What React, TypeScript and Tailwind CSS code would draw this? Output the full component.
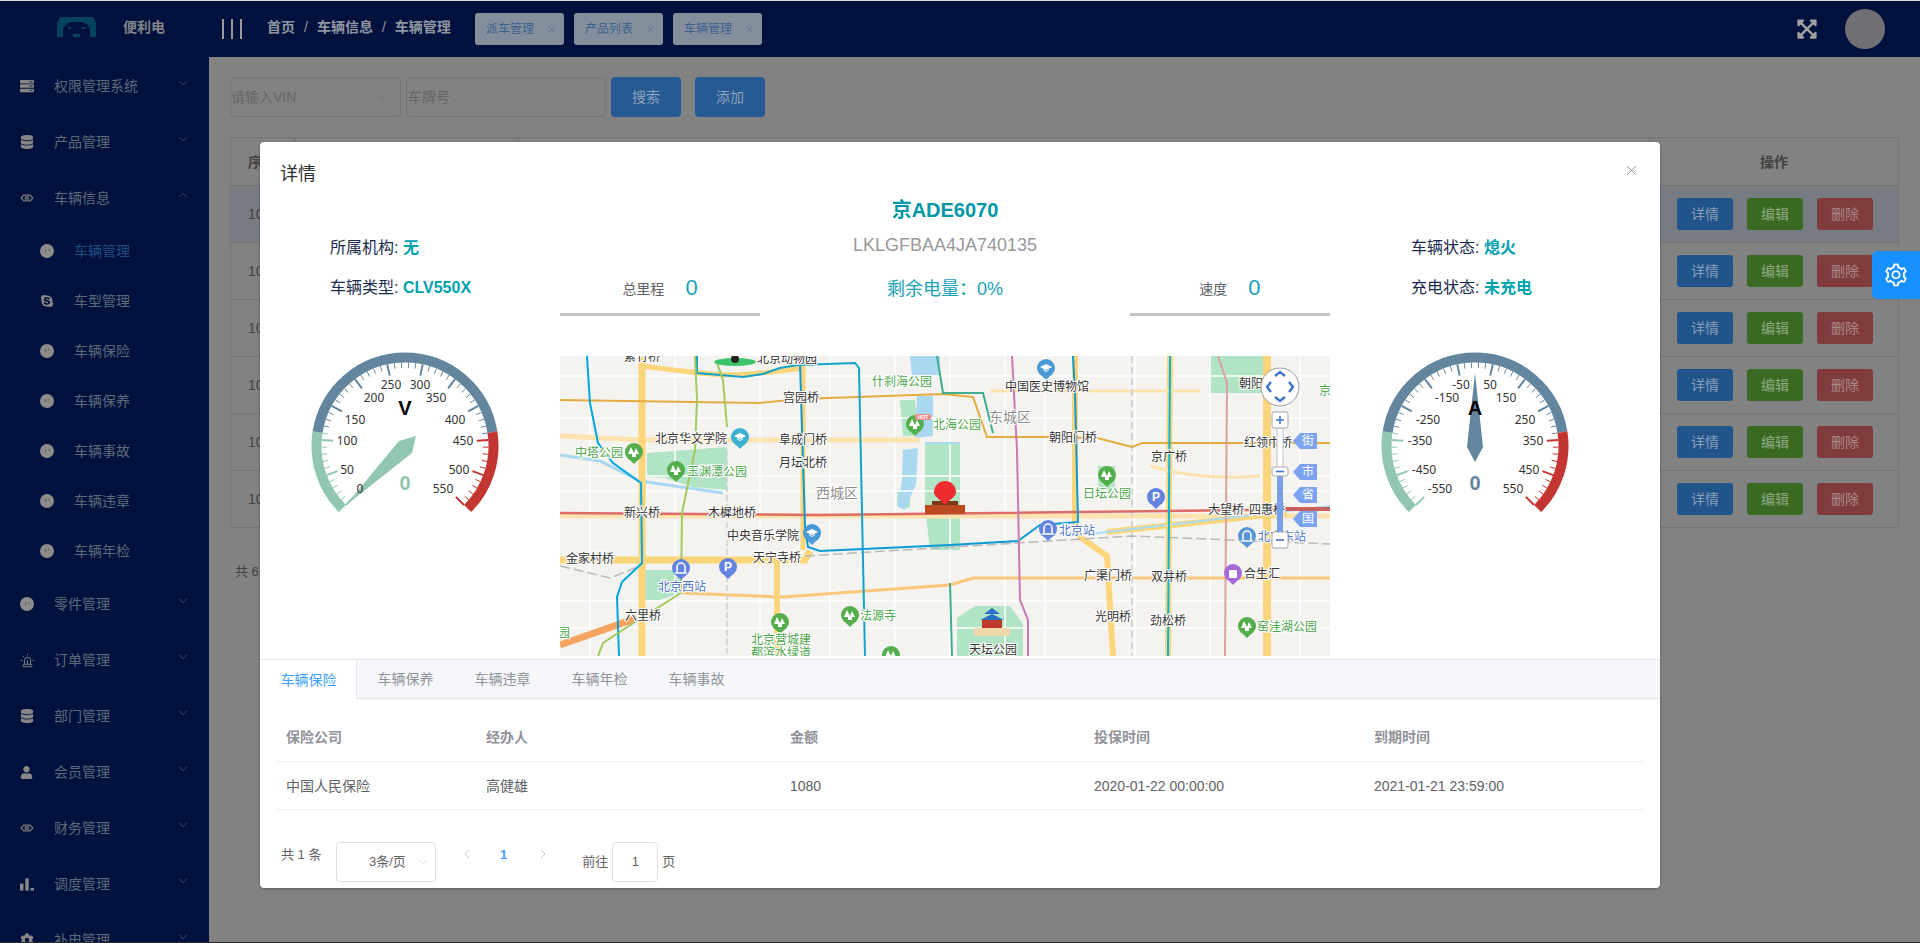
import { ChevronDown, ChevronLeft, ChevronRight, ChevronUp, Siren, X } from "lucide-react";
import { AiOutlineSetting } from "react-icons/ai";
import { FaCog, FaDatabase, FaExpandArrowsAlt, FaServer, FaSkype, FaUser } from "react-icons/fa";

const BubbleIcon = () => (
	<svg width="14" height="14" viewBox="0 0 14 14">
		<circle cx="7" cy="7" r="7" fill="#8c8c8c" />
		<path d="M5 6h1.5M8 6h1.5M5 7.5h1" stroke="#4a4a4a" strokeWidth="0.8" />
	</svg>
);

const EyeIcon = () => (
	<svg width="14" height="10" viewBox="0 0 16 12" fill="none" stroke="#7a7a7a" strokeWidth="1.4">
		<path d="M1 6 4 2.5h8L15 6l-3 3.5H4z" />
		<path d="M6 4v4M8 3.5v5M10 4v4" />
	</svg>
);

const BarsIcon = () => (
	<svg width="14" height="13" viewBox="0 0 16 14" fill="#868686">
		<rect x="0" y="6" width="4" height="8" />
		<rect x="6" y="0" width="4" height="14" />
		<rect x="12" y="11" width="4" height="3" />
	</svg>
);

const menuTop = [
	{ name: "权限管理系统", icon: <FaServer size={14} color="#868686" /> },
	{ name: "产品管理", icon: <FaDatabase size={14} color="#868686" /> },
];

const subMenu = [
	{ name: "车辆管理", active: true, icon: <BubbleIcon /> },
	{ name: "车型管理", icon: <FaSkype size={14} color="#868686" /> },
	{ name: "车辆保险", icon: <BubbleIcon /> },
	{ name: "车辆保养", icon: <BubbleIcon /> },
	{ name: "车辆事故", icon: <BubbleIcon /> },
	{ name: "车辆违章", icon: <BubbleIcon /> },
	{ name: "车辆年检", icon: <BubbleIcon /> },
];

const menuBottom = [
	{ name: "零件管理", icon: <BubbleIcon /> },
	{ name: "订单管理", icon: <Siren size={15} color="#868686" strokeWidth={1.5} /> },
	{ name: "部门管理", icon: <FaDatabase size={14} color="#868686" /> },
	{ name: "会员管理", icon: <FaUser size={13} color="#868686" /> },
	{ name: "财务管理", icon: <EyeIcon /> },
	{ name: "调度管理", icon: <BarsIcon /> },
	{ name: "补电管理", icon: <FaCog size={14} color="#868686" /> },
];

const MenuItem = ({ name, icon, open }: { name: string; icon: React.ReactNode; open?: boolean }) => (
	<div className="relative flex h-14 shrink-0 items-center pl-5 text-sm text-[#5f6a78]">
		<span className="flex w-[34px] items-center">{icon}</span>
		<span>{name}</span>
		<span className="absolute left-[176px] top-[18px]">
			{open ? (
				<ChevronUp size={14} strokeWidth={1} color="#6a7482" />
			) : (
				<ChevronDown size={14} strokeWidth={1} color="#6a7482" />
			)}
		</span>
	</div>
);

const Sidebar = () => (
	<aside className="flex w-[209px] shrink-0 flex-col overflow-hidden bg-[#00113e] pt-px">
		{menuTop.map((m) => (
			<MenuItem key={m.name} {...m} />
		))}
		<MenuItem name="车辆信息" icon={<EyeIcon />} open />
		{subMenu.map((m) => (
			<div
				key={m.name}
				className={`flex h-[50px] shrink-0 items-center pl-10 text-sm ${m.active ? "text-[#204f80]" : "text-[#5f6a78]"}`}
			>
				<span className="flex w-[34px] items-center">{m.icon}</span>
				<span>{m.name}</span>
			</div>
		))}
		{menuBottom.map((m) => (
			<MenuItem key={m.name} {...m} />
		))}
	</aside>
);

const tags = ["派车管理", "产品列表", "车辆管理"];

const Header = () => (
	<header className="flex h-14 shrink-0 items-center bg-[#00113e]">
		<div className="flex w-[222px] shrink-0 items-center pl-[57px]">
			<svg width="39" height="20" viewBox="0 0 39 20" className="-mt-1">
				<path d="M3 0H36L39 6V20H33V12Q31 7 25 5H14Q8 7 6 12V20H0V6z" fill="#05435c" />
				<rect x="11" y="10" width="3" height="2" fill="#05435c" />
				<rect x="25" y="10" width="3" height="2" fill="#05435c" />
				<rect x="16" y="17" width="7" height="3" fill="#05435c" />
			</svg>
			<span className="-mt-1 ml-[27px] text-sm font-bold text-[#808488]">便利电</span>
		</div>
		<div className="flex h-5 w-[45px] shrink-0 gap-[7px]">
			<i className="h-5 w-0.5 bg-[#9a9a9a]" />
			<i className="h-5 w-0.5 bg-[#9a9a9a]" />
			<i className="h-5 w-0.5 bg-[#9a9a9a]" />
		</div>
		<div className="-mt-1 flex w-[208px] shrink-0 items-center gap-[9px] text-sm font-bold text-[#9096a0]">
			<span>首页</span>
			<span className="font-normal">/</span>
			<span>车辆信息</span>
			<span className="font-normal">/</span>
			<span>车辆管理</span>
		</div>
		<div className="flex gap-[10px]">
			{tags.map((t) => (
				<div
					key={t}
					className="flex h-8 w-[89px] items-center rounded-[3px] bg-[#858f9c] pl-[11px] text-xs text-[#3b5f8f]"
				>
					<span>{t}</span>
					<X size={11} strokeWidth={1.2} className="ml-3" />
				</div>
			))}
		</div>
		<div className="ml-auto flex items-center gap-[27px] pr-[35px]">
			<FaExpandArrowsAlt size={22} color="#a0a0a0" />
			<div className="h-10 w-10 rounded-full bg-[#717175]" />
		</div>
	</header>
);

const rowButtons = [
	{ label: "详情", cls: "bg-[#22548c] text-[#8aa0b8]" },
	{ label: "编辑", cls: "bg-[#3a6a22] text-[#8ea884]" },
	{ label: "删除", cls: "bg-[#803c3c] text-[#a88a8a]" },
];

const rowIds = ["1025", "1024", "1023", "1022", "1021", "1020"];

const PageBody = () => (
	<main className="flex-1 overflow-hidden bg-[#828282] pl-[21px] pr-[21px] pt-5">
		<div className="flex h-10 items-center text-sm">
			<div className="flex h-10 w-[171px] items-center justify-between rounded border border-[#757575] pr-[11px] text-[#666]">
				<span>请输入VIN</span>
				<ChevronDown size={14} strokeWidth={1} />
			</div>
			<div className="ml-[5px] flex h-10 w-[200px] items-center rounded border border-[#757575] pl-px text-[#666]">
				车牌号
			</div>
			<button className="ml-[5px] h-10 w-[70px] rounded bg-[#275a93] text-[#8ea3bc]">搜索</button>
			<button className="ml-[14px] h-10 w-[70px] rounded bg-[#275a93] text-[#8ea3bc]">添加</button>
		</div>
		<div className="mt-5 w-[1669px] border border-b-0 border-[#757575] text-sm text-[#424242]">
			<div className="flex h-12 items-center border-b border-[#757575] font-bold">
				<div className="h-full w-[65px] border-r border-[#757575] pl-[17px] leading-[48px]">序</div>
				<div className="h-full w-[223px] border-r border-[#757575]" />
				<div className="h-full flex-1" />
				<div className="h-full w-[249px] border-l border-[#757575] text-center leading-[48px]">操作</div>
			</div>
			{rowIds.map((id, i) => (
				<div
					key={id}
					className={`flex h-[57px] items-center border-b border-[#757575] ${i === 0 ? "bg-[#767c82]" : ""}`}
				>
					<div className="w-[65px] pl-[17px]">{id}</div>
					<div className="flex-1" />
					<div className="flex w-[221px] justify-start gap-[14px]">
						{rowButtons.map((b) => (
							<span
								key={b.label}
								className={`flex h-8 w-[56px] shrink-0 items-center justify-center rounded-[3px] ${b.cls}`}
							>
								{b.label}
							</span>
						))}
					</div>
				</div>
			))}
		</div>
		<div className="ml-[5px] mt-[34px] text-[13px] text-[#3f3f3f]">共 6 条</div>
	</main>
);

// echarts style gauge, start 225deg, end -45deg
const polar = (deg: number, r: number, cx: number, cy: number) => {
	const a = (deg * Math.PI) / 180;
	return [cx + r * Math.cos(a), cy - r * Math.sin(a)];
};

const arc = (from: number, to: number, r: number, cx: number, cy: number) => {
	const [x1, y1] = polar(from, r, cx, cy);
	const [x2, y2] = polar(to, r, cx, cy);
	return `M${x1} ${y1}A${r} ${r} 0 ${from - to > 180 ? 1 : 0} 1 ${x2} ${y2}`;
};

const Gauge = ({
	title,
	color,
	needle,
	labels,
}: {
	title: string;
	color: string;
	needle: string;
	labels: [string, number, number][];
}) => {
	const cx = 145;
	const cy = 105;
	const ticks = [];
	for (let i = 0; i <= 55; i++) {
		const p = i / 55;
		const deg = 225 - p * 270;
		const major = i % 5 === 0;
		const c = p <= 0.2 ? "#91c7ae" : p <= 0.8 ? "#63869e" : "#c23531";
		const [x1, y1] = polar(deg, 83.5, cx, cy);
		const [x2, y2] = polar(deg, major ? 72 : 78, cx, cy);
		ticks.push(<line key={i} x1={x1} y1={y1} x2={x2} y2={y2} stroke={c} strokeWidth={major ? 2 : 1} />);
	}
	return (
		<svg width="300" height="225" viewBox="0 0 300 225" className="mt-[33px]">
			<path d={arc(225, 171, 88.5, cx, cy)} fill="none" stroke="#91c7ae" strokeWidth="10" />
			<path d={arc(171, 9, 88.5, cx, cy)} fill="none" stroke="#63869e" strokeWidth="10" />
			<path d={arc(9, -45, 88.5, cx, cy)} fill="none" stroke="#c23531" strokeWidth="10" />
			{ticks}
			<polygon points={needle} fill={color} transform={`translate(${cx} ${cy})`} />
			{labels.map(([t, dx, dy]) => (
				<text
					key={t}
					x={cx + dx}
					y={cy + dy}
					textAnchor="middle"
					dominantBaseline="central"
					fontSize="12"
					fill="#333"
					className="font-['Noto_Sans',sans-serif]"
				>
					{t}
				</text>
			))}
			<text x={cx} y={cy - 38} textAnchor="middle" dominantBaseline="central" fontSize="20" fontWeight="700" fill="#000">
				{title}
			</text>
			<text x={cx} y={cy + 37} textAnchor="middle" dominantBaseline="central" fontSize="20" fontWeight="700" fill={color}>
				0
			</text>
		</svg>
	);
};

const voltLabels: [string, number, number][] = [
	["0", -45, 42],
	["50", -58, 23],
	["100", -58, -6],
	["150", -50, -27],
	["200", -31, -49],
	["250", -14, -62],
	["300", 15, -62],
	["350", 31, -49],
	["400", 50, -27],
	["450", 58, -6],
	["500", 54, 23],
	["550", 38, 42],
];

const ampLabels: [string, number, number][] = [
	["-550", -35, 42],
	["-450", -51, 23],
	["-350", -55, -6],
	["-250", -47, -27],
	["-150", -28, -49],
	["-50", -14, -62],
	["50", 15, -62],
	["150", 31, -49],
	["250", 50, -27],
	["350", 58, -6],
	["450", 54, 23],
	["550", 38, 42],
];

const parks = [
	"87,97 167,91 167,134 133,131 105,122 87,121",
	"340,44 355,44 358,80 343,80",
	"365,87 400,87 400,194 370,194 365,150",
	"85,214 122,214 122,236 100,244 85,244",
	"397,262 415,250 450,250 463,268 463,300 397,300",
	"650,0 703,0 703,37 650,37",
	"538,110 555,110 555,137 538,137",
	"337,134 350,134 350,152 337,150",
];

const waters = [
	"343,94 358,92 356,128 345,154 337,150 342,125",
	"357,40 373,40 373,80 355,82",
	"350,0 380,0 380,20 352,20",
];

const roads: { d: string; c: string; w: number; dash?: string }[] = [
	{ d: "M0 20H770M0 62H770M0 120H770M0 135H770M0 245H770M0 272H770", c: "#fff", w: 1.5 },
	{ d: "M30 0V300M115 0V300M200 0V300M270 0V300M335 0V300M390 0V300M445 0V300M485 0V300M575 0V300M650 0V300M740 0V300", c: "#fff", w: 1.5 },
	{ d: "M0 80 82 84H360", c: "#fce3b0", w: 5 },
	{ d: "M122 237 223 241 390 229 413 222H770", c: "#fcc77a", w: 3 },
	{ d: "M0 99 40 105 80 125 163 137", c: "#a9d8f0", w: 3 },
	{ d: "M365 87H400", c: "#a9d8f0", w: 2 },
	{ d: "M0 160H770", c: "#fce3b0", w: 5 },
	{ d: "M0 204H82L245 204 250 195", c: "#fdd67c", w: 7 },
	{ d: "M82 0V300", c: "#fdd67c", w: 7 },
	{ d: "M82 10Q120 15 150 18T243 12", c: "#fdd67c", w: 5 },
	{ d: "M243 7V194", c: "#fdd67c", w: 5 },
	{ d: "M217 207V300", c: "#fdd67c", w: 6 },
	{ d: "M515 0V166L520 181 547 200 553 300", c: "#fdd67c", w: 6 },
	{ d: "M547 176 727 157", c: "#fdd67c", w: 6 },
	{ d: "M530 178 770 150", c: "#a5dcf5", w: 2 },
	{ d: "M610 0 608 300", c: "#fdd67c", w: 6 },
	{ d: "M707 0V300", c: "#fdd67c", w: 8 },
	{ d: "M430 35H640M590 110Q640 125 700 120", c: "#fce3b0", w: 3 },
	{ d: "M0 289 77 262", c: "#f4a460", w: 7 },
	{ d: "M167 94V300", c: "#cfcfcf", w: 1.5, dash: "6 3" },
	{ d: "M572 0V300", c: "#d5d5d5", w: 2, dash: "7 4" },
	{ d: "M245 200 572 180 770 188", c: "#b8b8b8", w: 1.5, dash: "10 4" },
	{ d: "M0 210 50 222 80 210", c: "#b8b8b8", w: 1.5, dash: "10 4" },
	{ d: "M0 44 200 47 240 43 383 38 413 41 427 81H490L537 82 572 91 582 87H770", c: "#e5ab3f", w: 2 },
	{ d: "M0 157 260 159 770 153", c: "#dd6b66", w: 2.5 },
	{ d: "M725 153H770", c: "#c9605c", w: 4 },
	{ d: "M27 0 30 47 38 87 53 107 81 127 82 207 62 226 57 241 59 300", c: "#00a6e0", w: 2 },
	{ d: "M137 0V17L183 21 203 18 220 12 238 9 295 7 299 12 305 300", c: "#14a3c7", w: 2 },
	{ d: "M240 7 245 171 248 191 260 195 390 189 458 185 480 169 518 166 515 37 513 0", c: "#0b9ad6", w: 2 },
	{ d: "M135 0 137 44 135 94 122 157 121 237 78 264 43 287 38 300", c: "#a2c95e", w: 2 },
	{ d: "M157 7 163 24 167 71", c: "#a2c95e", w: 2 },
	{ d: "M377 0 383 37H423L433 77", c: "#3fae8c", w: 2 },
	{ d: "M390 227 392 300", c: "#3fae8c", w: 2 },
	{ d: "M452 0 457 94 460 244 468 264V300", c: "#c77ab5", w: 2 },
	{ d: "M658 0 667 27 665 300", c: "#dba1a1", w: 2 },
	{ d: "M610 0 608 300", c: "#00b4e0", w: 2 },
];

const green = "#4aa64a";
const blue = "#4c74c5";
const mapLabels: [string, number, number, string?, number?][] = [
	["紫竹桥", 82, 1],
	["北京动物园", 227, 3],
	["宫园桥", 241, 42],
	["什刹海公园", 342, 26, green],
	["北京华文学院", 131, 83],
	["阜成门桥", 243, 84],
	["月坛北桥", 243, 107],
	["西城区", 277, 137, "#8e8e8e", 14],
	["中塔公园", 39, 97, green],
	["玉渊潭公园", 157, 116, green],
	["新兴桥", 82, 157],
	["木樨地桥", 172, 157],
	["中央音乐学院", 203, 180],
	["金家村桥", 30, 203],
	["天宁寺桥", 217, 202],
	["北京西站", 122, 231, blue],
	["六里桥", 83, 260],
	["法源寺", 318, 260, green],
	["北京营城建", 221, 284, green],
	["都滨水绿道", 221, 297, green],
	["园", 4, 277, green],
	["中国医史博物馆", 487, 31],
	["东城区", 450, 61, "#8e8e8e", 14],
	["北海公园", 397, 69, green],
	["朝阳门桥", 513, 82],
	["红领巾桥", 708, 87],
	["京广桥", 609, 101],
	["日坛公园", 547, 138, green],
	["大望桥", 666, 154],
	["四惠桥", 707, 154],
	["北京站", 517, 175, blue],
	["北京东站", 722, 181, blue],
	["广渠门桥", 548, 220],
	["双井桥", 609, 221],
	["合生汇", 702, 218],
	["光明桥", 553, 261],
	["劲松桥", 608, 265],
	["窑洼湖公园", 727, 271, green],
	["天坛公园", 433, 294],
	["朝阳门", 697, 28],
	["京", 765, 35, green],
];

type PinKind = "park" | "school" | "rail" | "P" | "shop";
const pins: [number, number, string, PinKind][] = [
	[180, 81, "#3fb1d0", "school"],
	[74, 96, "#55ae4d", "park"],
	[116, 114, "#55ae4d", "park"],
	[121, 212, "#6284e0", "rail"],
	[168, 211, "#6284e0", "P"],
	[252, 177, "#4a9ad6", "school"],
	[290, 259, "#55ae4d", "park"],
	[220, 266, "#55ae4d", "park"],
	[355, 68, "#55ae4d", "park"],
	[331, 299, "#55ae4d", "park"],
	[486, 12, "#4a9ad6", "school"],
	[547, 119, "#55ae4d", "park"],
	[596, 141, "#6284e0", "P"],
	[488, 173, "#6284e0", "rail"],
	[687, 180, "#5b96d2", "rail"],
	[673, 217, "#a56cd8", "shop"],
	[687, 270, "#55ae4d", "park"],
];

const PinGlyph = ({ x, y, kind }: { x: number; y: number; kind: PinKind }) => {
	if (kind === "P") {
		return (
			<text x={x} y={y + 4} textAnchor="middle" fontSize="12" fontWeight="700" fill="#fff">
				P
			</text>
		);
	}
	if (kind === "park") {
		return (
			<path
				d={`M${x - 2} ${y + 5}V${y + 2}L${x - 6} ${y + 2}L${x - 3} ${y - 5}L${x} ${y + 1}L${x + 2} ${y - 4}L${x + 5} ${y + 2}H${x + 2}V${y + 5}z`}
				fill="#fff"
			/>
		);
	}
	if (kind === "school") {
		return <path d={`M${x - 6} ${y - 1}L${x} ${y - 4}L${x + 6} ${y - 1}L${x} ${y + 2}zM${x - 3} ${y + 2}L${x} ${y + 4}L${x + 3} ${y + 2}V${y + 1}L${x} ${y + 3}L${x - 3} ${y + 1}z`} fill="#fff" />;
	}
	if (kind === "rail") {
		return (
			<path
				d={`M${x - 4} ${y + 4}V${y - 1}a4 4 0 0 1 8 0V${y + 4}M${x - 6} ${y + 5}H${x + 6}`}
				fill="none"
				stroke="#fff"
				strokeWidth="1.5"
			/>
		);
	}
	return <rect x={x - 4} y={y - 3} width="8" height="8" rx="1" fill="#fff" />;
};

const levels: [string, number][] = [
	["街", 77],
	["市", 108],
	["省", 131],
	["国", 155],
];

const MapView = () => (
	<svg width="770" height="300" viewBox="0 0 770 300" className="block bg-[#f4f3f0]">
		{parks.map((p) => (
			<polygon key={p} points={p} fill="#b0e4c4" />
		))}
		{waters.map((p) => (
			<polygon key={p} points={p} fill="#a9d8f0" />
		))}
		{roads.map((r, i) => (
			<path key={i} d={r.d} fill="none" stroke={r.c} strokeWidth={r.w} strokeDasharray={r.dash} />
		))}
		<ellipse cx="175" cy="6" rx="21" ry="4" fill="#3cc46a" />
		<circle cx="175" cy="3" r="4" fill="#222" />
		{pins.map(([x, y, c, kind]) => (
			<g key={`${x}-${y}`}>
				<path d={`M${x - 6} ${y + 6}L${x} ${y + 12}L${x + 6} ${y + 6}z`} fill={c} />
				<circle cx={x} cy={y} r="9" fill={c} />
				<PinGlyph x={x} y={y} kind={kind} />
			</g>
		))}
		<rect x="355" y="58" width="16" height="6" rx="2" fill="#f08a8a" />
		<text x="363" y="63" textAnchor="middle" fontSize="5" fontWeight="700" fill="#fff">
			HOT
		</text>
		{mapLabels.map(([t, x, y, c, s]) => (
			<text
				key={t}
				x={x}
				y={y}
				textAnchor="middle"
				dominantBaseline="central"
				fontSize={s ?? 12}
				fill={c ?? "#333"}
				stroke="#fff"
				strokeWidth="2"
				className="[paint-order:stroke]"
			>
				{t}
			</text>
		))}
		{/* tiananmen + marker */}
		<rect x="365" y="149" width="40" height="9" fill="#bb4a20" />
		<rect x="372" y="145" width="26" height="4" fill="#7a3a18" />
		<path d="M385 149c-4-5-11-8-11-13a11 11 0 0 1 22 0c0 5-7 8-11 13z" fill="#ee2c2f" />
		{/* temple of heaven */}
		<rect x="414" y="272" width="36" height="8" fill="#f0d9a8" />
		<rect x="422" y="264" width="20" height="8" fill="#c0392b" />
		<path d="M420 264 432 258 444 264zM424 258 432 252 440 258z" fill="#2a6fc0" />
		{/* controls */}
		<circle cx="720" cy="31" r="19" fill="#fff" stroke="#9a9a9a" />
		<path
			d="M715 20l5-4 5 4M715 41l5 4 5-4M711 26l-4 5 4 5M729 26l4 5-4 5"
			fill="none"
			stroke="#3f72d0"
			strokeWidth="2.4"
		/>
		<rect x="717" y="72" width="6" height="40" fill="#fff" stroke="#c4c4c4" />
		<rect x="717" y="120" width="6" height="56" fill="#7a9ee8" />
		<rect x="712" y="56" width="16" height="16" rx="2" fill="#fff" stroke="#a8a8a8" />
		<path d="M716 64h8M720 60v8" stroke="#3f72d0" strokeWidth="1.6" />
		<rect x="712" y="111" width="16" height="9" rx="2" fill="#fff" stroke="#a8a8a8" />
		<path d="M716 115.5h8" stroke="#3f72d0" strokeWidth="1.6" />
		<rect x="712" y="176" width="16" height="16" rx="2" fill="#fff" stroke="#a8a8a8" />
		<path d="M716 184h8" stroke="#3f72d0" strokeWidth="1.6" />
		{levels.map(([t, y]) => (
			<g key={t}>
				<path d={`M733 ${y + 8}L740 ${y}H757V${y + 16}H740z`} fill="#7ba3f0" />
				<text x="748" y={y + 12} textAnchor="middle" fontSize="12" fill="#fff">
					{t}
				</text>
			</g>
		))}
	</svg>
);

const tabs = ["车辆保险", "车辆保养", "车辆违章", "车辆年检", "车辆事故"];

const Stat = ({ label }: { label: string }) => (
	<div className="flex h-[59px] w-[200px] items-center justify-center gap-[21px] border-b-[3px] border-[#c4c4c4] pt-2">
		<span className="text-sm text-[#606266]">{label}</span>
		<span className="-mt-1 text-[22px] text-[#17a2b8]">0</span>
	</div>
);

const InfoLine = ({ label, value }: { label: string; value: string }) => (
	<div className="flex h-10 items-center text-base text-[#1a2b4d]">
		<span>{label}:&nbsp;</span>
		<span className="font-bold text-[#00a2b0]">{value}</span>
	</div>
);

const DetailModal = () => (
	<div className="absolute left-[260px] top-[142px] flex h-[746px] w-[1400px] flex-col rounded-sm bg-white shadow-[0_1px_3px_rgba(0,0,0,0.3)]">
		<div className="h-[55px] shrink-0 pl-5 pt-5 text-lg leading-6 text-[#303133]">详情</div>
		<X size={17} strokeWidth={1.2} color="#808388" className="absolute right-5 top-5" />
		<div className="flex h-[462px] shrink-0 overflow-hidden">
			<div className="w-[300px] shrink-0 pt-[31px]">
				<div className="pl-[70px]">
					<InfoLine label="所属机构" value="无" />
					<InfoLine label="车辆类型" value="CLV550X" />
				</div>
				<Gauge title="V" color="#91c7ae" labels={voltLabels} needle="-60,60 -6,-5 11,-10 7,7" />
			</div>
			<div className="w-[770px] shrink-0">
				<div className="h-[26px] text-center text-xl font-bold leading-[26px] text-[#0097a7]">京ADE6070</div>
				<div className="mt-[10px] h-6 text-center text-lg leading-6 text-[#999]">LKLGFBAA4JA740135</div>
				<div className="flex items-start justify-between">
					<Stat label="总里程" />
					<div className="pt-5 text-lg leading-6 text-[#17a2b8]">剩余电量：0%</div>
					<Stat label="速度" />
				</div>
				<div className="mt-10">
					<MapView />
				</div>
			</div>
			<div className="w-[330px] shrink-0 pt-[31px]">
				<div className="pl-[81px]">
					<InfoLine label="车辆状态" value="熄火" />
					<InfoLine label="充电状态" value="未充电" />
				</div>
				<Gauge title="A" color="#63869e" labels={ampLabels} needle="0,-73 8,1 0,16 -8,1" />
			</div>
		</div>
		<div className="flex h-10 shrink-0 border-y border-[#e4e7ed] bg-[#f5f7fa] text-sm">
			{tabs.map((t, i) => (
				<div
					key={t}
					className={`flex w-[97px] items-center justify-center ${i === 0 ? "-mb-px border-r border-[#e4e7ed] bg-white pl-px text-[#409eff]" : "text-[#909399]"}`}
				>
					{t}
				</div>
			))}
		</div>
		<div className="mx-4 mt-[14px] text-sm">
			<div className="grid h-[49px] grid-cols-[200px_304px_304px_280px_1fr] items-center border-b border-[#ebeef5] font-bold text-[#909399]">
				{["保险公司", "经办人", "金额", "投保时间", "到期时间"].map((h) => (
					<div key={h} className="pl-[10px]">
						{h}
					</div>
				))}
			</div>
			<div className="grid h-12 grid-cols-[200px_304px_304px_280px_1fr] items-center border-b border-[#ebeef5] text-[#606266]">
				{["中国人民保险", "高健雄", "1080", "2020-01-22 00:00:00", "2021-01-21 23:59:00"].map((c) => (
					<div key={c} className="pl-[10px]">
						{c}
					</div>
				))}
			</div>
		</div>
		<div className="mt-8 flex h-10 items-start pl-[21px] text-[13px] text-[#606266]">
			<span className="mt-[3px] w-[55px]">共 1 条</span>
			<div className="flex h-10 w-[100px] items-center justify-between rounded border border-[#dcdfe6] pl-8 pr-[5px]">
				<span>3条/页</span>
				<ChevronDown size={14} strokeWidth={1} color="#c0c4cc" />
			</div>
			<ChevronLeft size={16} strokeWidth={1.5} color="#c0c4cc" className="ml-[23px] mt-1" />
			<span className="ml-[25px] mt-[3px] font-bold text-[#409eff]">1</span>
			<ChevronRight size={16} strokeWidth={1.5} color="#c0c4cc" className="ml-[28px] mt-1" />
			<span className="ml-[31px] flex h-10 items-center">前往</span>
			<div className="ml-1 flex h-10 w-[46px] items-center justify-center rounded border border-[#dcdfe6]">1</div>
			<span className="ml-1 flex h-10 items-center">页</span>
		</div>
	</div>
);

export default function App() {
	return (
		<div className="relative flex h-[943px] flex-col overflow-hidden bg-[#111] font-['Liberation_Sans','Noto_Sans_CJK_SC',sans-serif]">
			<div className="h-px shrink-0 bg-[#dcdcdc]" />
			<Header />
			<div className="flex min-h-0 flex-1">
				<Sidebar />
				<PageBody />
			</div>
			<div className="h-px shrink-0 bg-[#2a2a2a]" />
			<DetailModal />
			<div className="absolute right-0 top-[251px] flex h-12 w-12 items-center justify-center rounded-l-[5px] bg-[#1890ff]">
				<AiOutlineSetting size={26} color="#fff" />
			</div>
		</div>
	);
}
